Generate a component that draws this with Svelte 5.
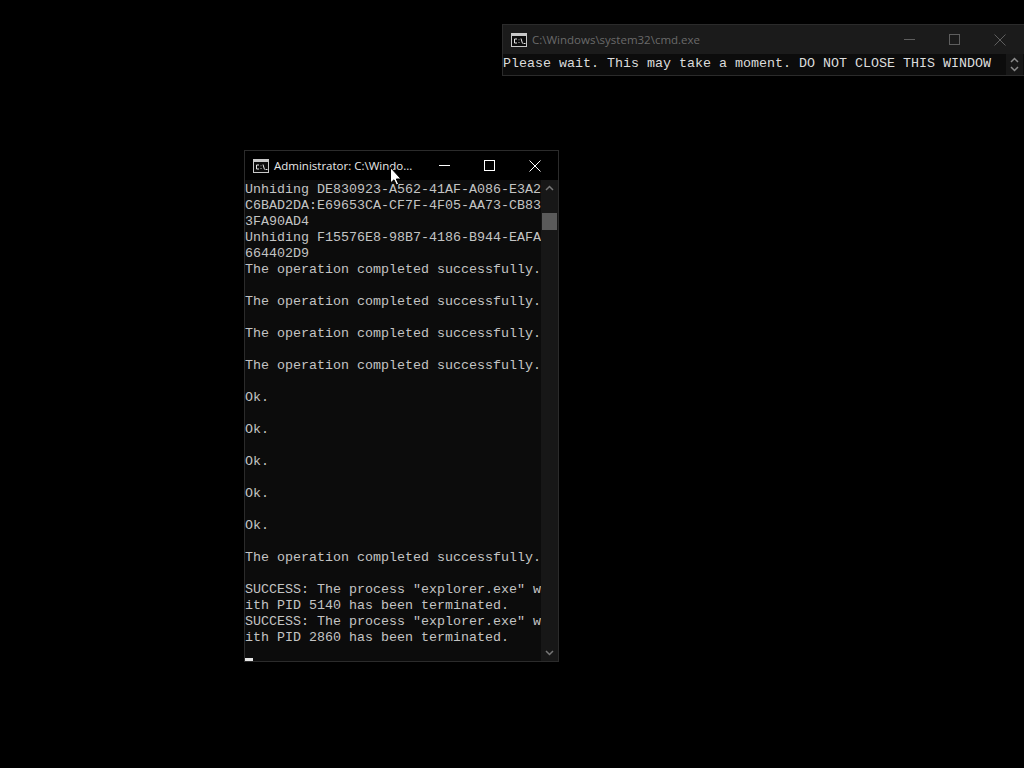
<script>
	const lines = [
		'Unhiding DE830923-A562-41AF-A086-E3A2',
		'C6BAD2DA:E69653CA-CF7F-4F05-AA73-CB83',
		'3FA90AD4',
		'Unhiding F15576E8-98B7-4186-B944-EAFA',
		'664402D9',
		'The operation completed successfully.',
		'',
		'The operation completed successfully.',
		'',
		'The operation completed successfully.',
		'',
		'The operation completed successfully.',
		'',
		'Ok.',
		'',
		'Ok.',
		'',
		'Ok.',
		'',
		'Ok.',
		'',
		'Ok.',
		'',
		'The operation completed successfully.',
		'',
		'SUCCESS: The process "explorer.exe" w',
		'ith PID 5140 has been terminated.',
		'SUCCESS: The process "explorer.exe" w',
		'ith PID 2860 has been terminated.'
	];
</script>

{#snippet cmdIcon()}
	<svg class="icon" width="16" height="14" viewBox="0 0 16 14">
		<rect x="0.5" y="0.5" width="15" height="13" fill="#0c0c0c" stroke="#c8c8c8" />
		<rect x="1" y="1" width="14" height="2" fill="#c8c8c8" />
		<path d="M6 6H3.5V10H6M8 6.5V7.2M8 9.2V10M10 5.5L11.5 10.5M12.5 10.5H14.5" fill="none" stroke="#e6e6e6" />
	</svg>
{/snippet}

{#snippet caption()}
	<div class="buttons">
		<svg width="11" height="11" viewBox="0 0 11 11"><path d="M0 5.5H11" stroke="currentColor" /></svg>
		<svg width="11" height="11" viewBox="0 0 11 11"><rect x="0.5" y="0.5" width="10" height="10" fill="none" stroke="currentColor" /></svg>
		<svg width="12" height="12" viewBox="0 0 12 12"><path d="M0.5 0.5L11.5 11.5M11.5 0.5L0.5 11.5" stroke="currentColor" /></svg>
	</div>
{/snippet}

<main class="desktop">
	<section class="window top">
		<header class="titlebar">
			{@render cmdIcon()}
			<span class="title">C:\Windows\system32\cmd.exe</span>
			{@render caption()}
		</header>
		<div class="body">
			<pre class="console">Please wait. This may take a moment. DO NOT CLOSE THIS WINDOW</pre>
			<div class="scrollbar">
				<svg width="9" height="6" viewBox="0 0 9 6"><path d="M1 5L4.5 1.5L8 5" fill="none" stroke="#8a8a8a" stroke-width="1.5" /></svg>
				<svg width="9" height="6" viewBox="0 0 9 6"><path d="M1 1L4.5 4.5L8 1" fill="none" stroke="#8a8a8a" stroke-width="1.5" /></svg>
			</div>
		</div>
	</section>

	<section class="window admin">
		<header class="titlebar">
			{@render cmdIcon()}
			<span class="title">Administrator: C:\Windo...</span>
			{@render caption()}
		</header>
		<div class="body">
			<div class="console">
				{#each lines as line}
					<pre>{line}</pre>
				{/each}
				<i class="cursor"></i>
			</div>
			<div class="scrollbar">
				<svg width="9" height="6" viewBox="0 0 9 6"><path d="M1 5L4.5 1.5L8 5" fill="none" stroke="#777" stroke-width="1.5" /></svg>
				<b class="thumb"></b>
				<svg width="9" height="6" viewBox="0 0 9 6"><path d="M1 1L4.5 4.5L8 1" fill="none" stroke="#777" stroke-width="1.5" /></svg>
			</div>
		</div>
	</section>

	<svg class="pointer" width="12" height="19" viewBox="0 0 12 19">
		<path d="M0.5 0.5V16L4 12.8L6.4 18L8.6 17L6.3 12H11Z" fill="#fff" stroke="#000" />
	</svg>
</main>

<style>
	:global(body) {
		background: #000;
	}

	.desktop {
		position: relative;
		width: 1024px;
		height: 768px;
		overflow: hidden;
		background: #000;
		font-family: 'Liberation Mono', monospace;
	}

	.window {
		position: absolute;
		display: flex;
		flex-direction: column;
		box-sizing: border-box;
		background: #0c0c0c;
		border: 1px solid #2b2b2b;
	}

	.top {
		left: 502px;
		top: 24px;
		width: 530px;
		height: 52px;
		color: #5e5e5e;
	}

	.admin {
		left: 244px;
		top: 150px;
		width: 315px;
		height: 512px;
		color: #fff;
	}

	.titlebar {
		display: flex;
		align-items: center;
		height: 29px;
		flex: none;
		padding-left: 8px;
		background: #000;
		font-family: 'Open Sans', 'Liberation Sans', sans-serif;
		font-size: 11.5px;
	}

	.top .titlebar {
		height: 29px;
		background: #1b1b1b;
	}

	.icon {
		flex: none;
		margin-right: 5px;
	}

	.title {
		flex: 1;
		white-space: nowrap;
	}

	.top .title {
		color: #6a6a6a;
	}

	.admin .title {
		color: #e8e8e8;
	}

	.buttons {
		display: flex;
		gap: 34px;
		align-items: center;
		padding-right: 17px;
	}

	.top .buttons {
		padding-right: 25px;
	}

	.body {
		display: flex;
		flex: 1;
		min-height: 0;
	}

	.console {
		flex: 1;
		margin: 0;
		padding-top: 2px;
		overflow: hidden;
		color: #c4c4c4;
		font-family: 'Liberation Mono', monospace;
		font-size: 13.33px;
		line-height: 16px;
	}

	.console pre {
		height: 16px;
		margin: 0;
		font: inherit;
	}

	.top .console {
		color: #dcdcdc;
		padding-top: 2px;
	}

	.top .body {
		padding-right: 8px;
	}

	.cursor {
		display: block;
		width: 8px;
		height: 3px;
		margin-top: 12px;
		background: #e6e6e6;
	}

	.scrollbar {
		display: flex;
		flex: none;
		flex-direction: column;
		align-items: center;
		justify-content: space-between;
		position: relative;
		width: 17px;
		padding: 5px 0;
		box-sizing: border-box;
		background: #171717;
	}

	.top .scrollbar {
		padding: 3px 0;
	}

	.thumb {
		position: absolute;
		left: 1px;
		top: 33px;
		width: 15px;
		height: 17px;
		background: #5a5a5a;
	}

	.pointer {
		position: absolute;
		left: 390px;
		top: 167px;
	}
</style>
